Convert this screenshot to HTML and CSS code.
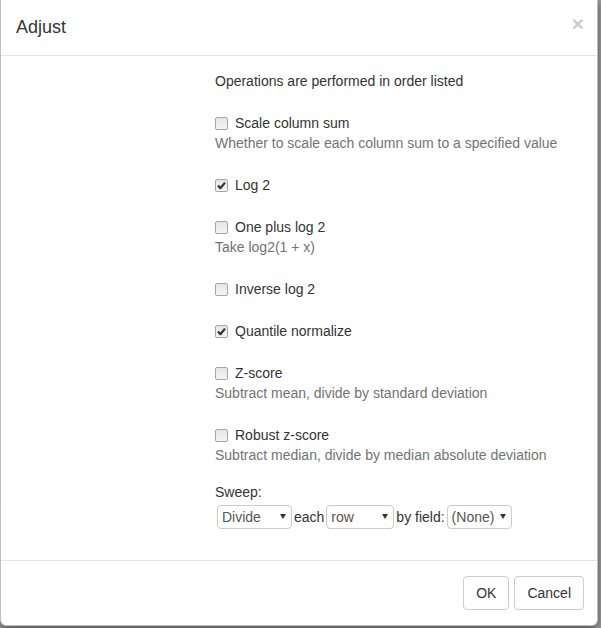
FILE: index.html
```html
<!DOCTYPE html>
<html>
<head>
<meta charset="utf-8">
<link rel="stylesheet" href="styles.css">
</head>
<body>
<div class="modal">
  <div class="modal-header">
    <h4 class="modal-title">Adjust</h4>
    <span class="close">×</span>
  </div>
  <div class="modal-body">
    <div class="form">
      <p class="item">Operations are performed in order listed</p>

      <div class="item">
        <label class="cb-label"><span class="cb"></span>Scale column sum</label>
        <div class="help">Whether to scale each column sum to a specified value</div>
      </div>

      <div class="item">
        <label class="cb-label"><span class="cb checked"><svg viewBox="0 0 13 13" width="13" height="13"><path d="M3 6.6 L5.4 9.2 L10 3.6" fill="none" stroke="#333" stroke-width="2.2" stroke-linejoin="round"/></svg></span>Log 2</label>
      </div>

      <div class="item">
        <label class="cb-label"><span class="cb"></span>One plus log 2</label>
        <div class="help">Take log2(1 + x)</div>
      </div>

      <div class="item">
        <label class="cb-label"><span class="cb"></span>Inverse log 2</label>
      </div>

      <div class="item">
        <label class="cb-label"><span class="cb checked"><svg viewBox="0 0 13 13" width="13" height="13"><path d="M3 6.6 L5.4 9.2 L10 3.6" fill="none" stroke="#333" stroke-width="2.2" stroke-linejoin="round"/></svg></span>Quantile normalize</label>
      </div>

      <div class="item">
        <label class="cb-label"><span class="cb"></span>Z-score</label>
        <div class="help">Subtract mean, divide by standard deviation</div>
      </div>

      <div class="item item-last">
        <label class="cb-label"><span class="cb"></span>Robust z-score</label>
        <div class="help">Subtract median, divide by median absolute deviation</div>
      </div>

      <div class="sweep">
        <div class="sweep-label">Sweep:</div>
        <div class="sweep-row">
          <span class="sel sel-op"><select><option>Divide</option></select></span>
          <span class="word">each</span>
          <span class="sel sel-dim"><select><option>row</option></select></span>
          <span class="word">by field:</span>
          <span class="sel sel-field"><select><option>(None)</option></select></span>
        </div>
      </div>
    </div>
  </div>
  <div class="modal-footer">
    <button class="btn">OK</button>
    <button class="btn">Cancel</button>
  </div>
</div>
</body>
</html>
```

FILE: styles.css
```css
html, body {
  margin: 0;
  padding: 0;
}
body {
  background: #9c9c9c;
  width: 601px;
  height: 628px;
  overflow: hidden;
  font-family: "Liberation Sans", Arial, Helvetica, sans-serif;
  font-size: 14px;
  line-height: 20px;
  color: #333;
}
.modal {
  width: 598px;
  box-sizing: border-box;
  background: #fff;
  border: 1px solid rgba(0, 0, 0, 0.25);
  border-top: none;
  border-radius: 0 0 6px 6px;
  box-shadow: 0 3px 9px rgba(0, 0, 0, 0.5);
}
.modal-header {
  display: flex;
  justify-content: space-between;
  align-items: flex-start;
  padding: 14px 13px 15px 15px;
  border-bottom: 1px solid #e5e5e5;
  border-radius: 6px 6px 0 0;
}
.modal-title {
  margin: 0;
  font-size: 18px;
  font-weight: normal;
  line-height: 26px;
  color: #333;
}
.close {
  font-size: 21px;
  font-weight: bold;
  line-height: 21px;
  color: #000;
  opacity: 0.2;
  margin-top: -1px;
}
.modal-body {
  padding: 15px 15px 31px 15px;
}
.form {
  margin-left: 199px;
}
.item {
  margin: 0 0 22px 0;
}
.item-last {
  margin-bottom: 17px;
}
.cb-label {
  display: flex;
  align-items: center;
  height: 20px;
}
.cb {
  width: 13px;
  height: 13px;
  box-sizing: border-box;
  border: 1px solid #a6a6a6;
  border-radius: 2px;
  background: linear-gradient(#e6e6e6, #f4f4f4);
  margin-right: 7px;
  position: relative;
  flex: none;
}
.cb svg {
  position: absolute;
  left: -1px;
  top: -1px;
}
.help {
  color: #737373;
}
.sweep-row {
  display: flex;
  align-items: center;
  margin-top: 3px;
  height: 24px;
}
.word {
  margin: 0 2px 0 2px;
}
.sel {
  position: relative;
  display: inline-block;
}
.sel select {
  appearance: none;
  -webkit-appearance: none;
  display: block;
  height: 24px;
  box-sizing: border-box;
  border: 1px solid #ccc;
  border-radius: 4px;
  background: #fff;
  font-family: "Liberation Sans", Arial, Helvetica, sans-serif;
  font-size: 14px;
  color: #555;
  padding: 0 0 0 4px;
  margin: 0;
}
.sel::after {
  content: "";
  position: absolute;
  right: 6px;
  top: 9px;
  border-left: 3px solid transparent;
  border-right: 3px solid transparent;
  border-top: 5px solid #333;
  pointer-events: none;
}
.sel-op { margin-left: 2px; }
.sel-op select { width: 75px; }
.sel-dim select { width: 68px; }
.sel-field select { width: 65px; }
.modal-footer {
  display: flex;
  justify-content: flex-end;
  gap: 5px;
  padding: 15px 13px 15px 15px;
  border-top: 1px solid #e5e5e5;
}
.btn {
  font-family: "Liberation Sans", Arial, Helvetica, sans-serif;
  font-size: 14px;
  line-height: 20px;
  color: #333;
  background: #fff;
  border: 1px solid #ccc;
  border-radius: 4px;
  padding: 6px 12px;
  margin: 0;
}
```
